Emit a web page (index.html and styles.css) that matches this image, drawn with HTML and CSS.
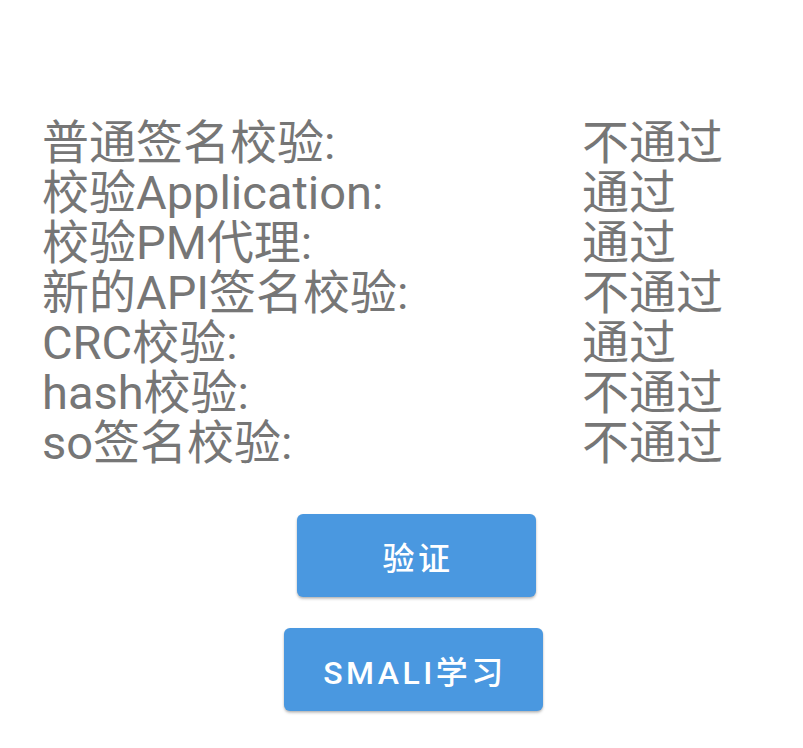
FILE: index.html
```html
<!DOCTYPE html>
<html>
<head>
<meta charset="utf-8">
<link rel="stylesheet" href="styles.css">
</head>
<body>
<div class="page">
  <div class="results">
    <div class="label">普通签名校验:</div><div class="value">不通过</div>
    <div class="label">校验Application:</div><div class="value">通过</div>
    <div class="label">校验PM代理:</div><div class="value">通过</div>
    <div class="label">新的API签名校验:</div><div class="value">不通过</div>
    <div class="label">CRC校验:</div><div class="value">通过</div>
    <div class="label">hash校验:</div><div class="value">不通过</div>
    <div class="label">so签名校验:</div><div class="value">不通过</div>
  </div>
  <div class="actions">
    <button class="btn btn-verify">验证</button>
    <button class="btn btn-smali">SMALI学习</button>
  </div>
</div>
</body>
</html>
```
FILE: styles.css
```css
html, body {
  margin: 0;
  padding: 0;
  background: #ffffff;
}
.page {
  width: 803px;
  height: 748px;
  padding-top: 118px;
  box-sizing: border-box;
  font-family: Roboto, "Noto Sans CJK SC", sans-serif;
}
.results {
  display: grid;
  grid-template-columns: 540px auto;
  padding-left: 42px;
  font-size: 47px;
  line-height: 50px;
  color: #767676;
}
.label, .value {
  white-space: nowrap;
}
.actions {
  display: flex;
  flex-direction: column;
  align-items: center;
  gap: 31px;
  margin-top: 46px;
  padding-left: 26px;
}
.btn {
  border: none;
  border-radius: 6px;
  background: #4a98e0;
  color: #ffffff;
  height: 83px;
  font-family: Roboto, "Noto Sans CJK SC", sans-serif;
  font-weight: 500;
  font-size: 32px;
  letter-spacing: 3.5px;
  box-shadow: 0 2px 3px rgba(0,0,0,0.2), 0 1px 2px rgba(0,0,0,0.12);
  padding: 0 0 0 3px;
}
.btn-verify {
  width: 239px;
  margin-left: 4px;
}
.btn-smali {
  width: 259px;
  margin-left: -2px;
}
```
